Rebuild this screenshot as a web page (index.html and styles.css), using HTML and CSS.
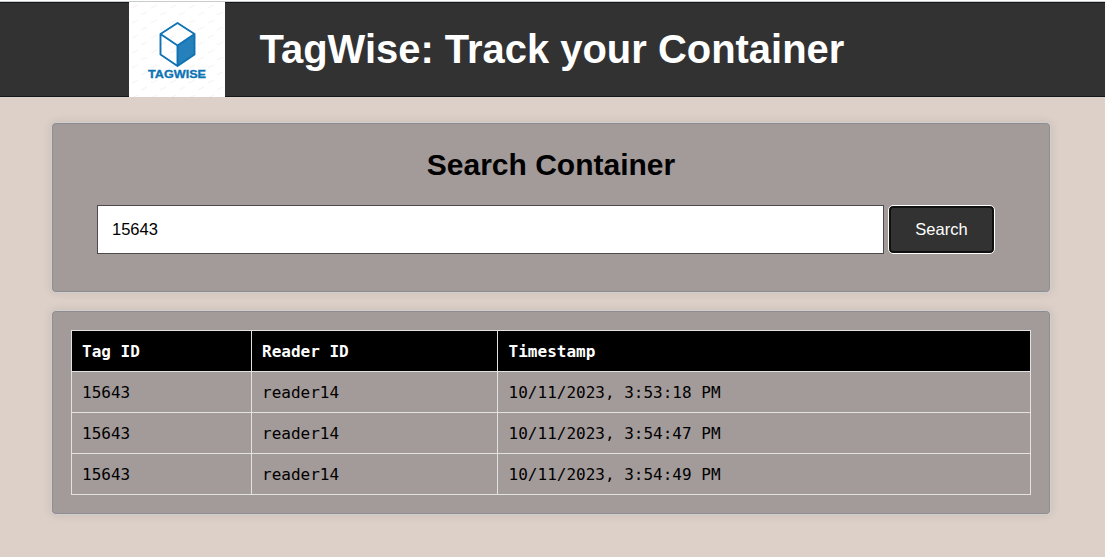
FILE: index.html
```html
<!DOCTYPE html>
<html lang="en">
<head>
<meta charset="utf-8">
<title>TagWise</title>
<link rel="stylesheet" href="styles.css">
</head>
<body>
<header class="header">
  <svg class="logo" viewBox="0 0 96 95" role="img" aria-label="TagWise logo">
    <defs>
      <pattern id="marks" width="19" height="15" patternUnits="userSpaceOnUse">
        <path d="M3 6l6-3M12 13l6-3" stroke="#f2f2f2" stroke-width="1"/>
      </pattern>
    </defs>
    <rect width="96" height="95" fill="#fff"/>
    <rect width="96" height="95" fill="url(#marks)"/>
    <path d="M48.5 43.5L65.5 32.5V52.5L48.5 64Z" fill="#2680bb"/>
    <path d="M48.5 21L65.5 32V52.5L48.5 64L31.5 52.5V32Z M31.5 32L48.5 43.5L65.5 32M48.5 43.5V64" fill="none" stroke="#0e73b5" stroke-width="1.9" stroke-linejoin="round"/>
    <text x="19" y="75.8" class="logo-text" textLength="58" lengthAdjust="spacingAndGlyphs">TAGWISE</text>
  </svg>
  <h1 class="title">TagWise: Track your Container</h1>
</header>
<main class="content">
  <section class="card search-card">
    <h2 class="heading">Search Container</h2>
    <form class="search-form">
      <input class="search-input" type="text" value="15643" aria-label="Tag ID">
      <button class="search-button" type="button">Search</button>
    </form>
  </section>
  <section class="card results-card">
    <table class="results">
      <colgroup><col class="col-tag"><col class="col-reader"><col></colgroup>
      <thead><tr><th>Tag ID</th><th>Reader ID</th><th>Timestamp</th></tr></thead>
      <tbody>
        <tr><td>15643</td><td>reader14</td><td>10/11/2023, 3:53:18 PM</td></tr>
        <tr><td>15643</td><td>reader14</td><td>10/11/2023, 3:54:47 PM</td></tr>
        <tr><td>15643</td><td>reader14</td><td>10/11/2023, 3:54:49 PM</td></tr>
      </tbody>
    </table>
  </section>
</main>
</body>
</html>
```
FILE: styles.css
```css
* { box-sizing: border-box; }
body {
  margin: 0;
  min-height: 557px;
  background: #ddd0c8;
  font-family: "Liberation Sans", Arial, sans-serif;
  color: #000;
  overflow: hidden;
  border-top: 1px solid #fff;
}
.header {
  display: flex;
  align-items: center;
  height: 96px;
  padding-left: 129px;
  background: #323232;
  border-top: 1px solid #c8cccc;
  box-shadow: inset 0 1px #14181b, inset 0 -1px #14181b;
}
.logo { width: 96px; height: 95px; flex: none; }
.logo-text {
  font: bold 10.4px "Liberation Sans", sans-serif;
  fill: #0e73b5;
  stroke: #0e73b5;
  stroke-width: 0.3px;
}
.title {
  margin: 0 0 2px 34.5px;
  font-size: 39.95px;
  line-height: 46px;
  color: #fff;
  white-space: nowrap;
}
.content {
  display: flex;
  flex-direction: column;
  gap: 17px;
  width: 1000px;
  margin: 25px 0 0 51px;
}
.card {
  background: #a39a9a;
  border: 1px solid #cdd0d0;
  border-radius: 5px;
  box-shadow: inset 0 0 0 1px #928b8e, 0 0 10px rgba(0, 0, 0, 0.1);
}
.search-card { height: 171px; padding: 24px 45px 0; }
.heading {
  margin: 0 0 23px;
  font-size: 30px;
  line-height: 35px;
  text-align: center;
}
.search-form { display: flex; gap: 4px; }
.search-input {
  width: 787px;
  height: 49px;
  padding: 0 14px;
  border: 1px solid #4e4a4c;
  border-radius: 0;
  background: #fff;
  font: 16.5px "Liberation Sans", Arial, sans-serif;
}
.search-button {
  width: 107px;
  height: 49px;
  padding: 0;
  border: 1px solid #fff;
  border-radius: 5px;
  box-shadow: inset 0 0 0 2px #101010;
  background: #323232;
  color: #fff;
  font: 16.5px "Liberation Sans", Arial, sans-serif;
}
.results-card { height: 205px; padding: 19px; }
.results {
  width: 960px;
  table-layout: fixed;
  border-collapse: collapse;
  font: 16px "DejaVu Sans Mono", monospace;
}
.col-tag { width: 180px; }
.col-reader { width: 246px; }
.results th,
.results td {
  height: 41px;
  padding: 0 10px;
  border: 1px solid #e2e2e2;
  text-align: left;
}
.results th:last-child,
.results td:last-child { padding-left: 10.6px; }
.results th { background: #000; color: #fff; }
```
